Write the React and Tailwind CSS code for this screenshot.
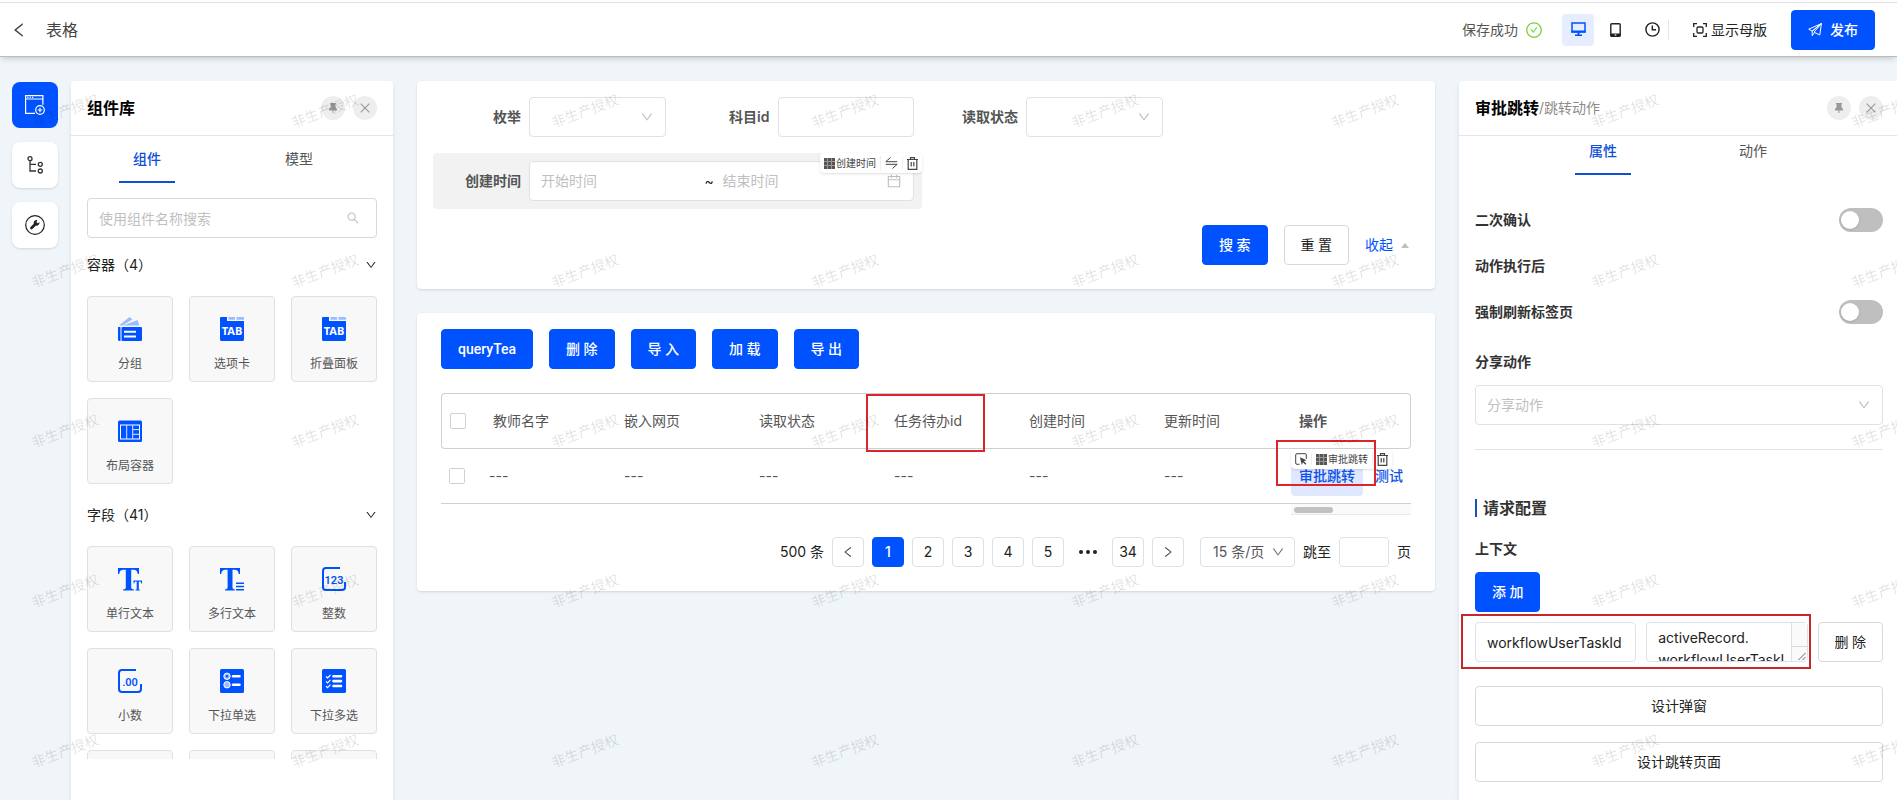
import { useState } from 'react'
import {
  AiOutlineCalendar,
  AiOutlineCheckCircle,
  AiOutlineClose,
  AiOutlineDown,
  AiOutlineLeft,
  AiOutlineRight,
  AiOutlineSearch,
} from 'react-icons/ai'

const BLUE = '#0052ff'
const LIGHT = '#9dbcff'

const CONTAINERS = [
  { name: '分组', icon: GroupIcon },
  { name: '选项卡', icon: TabIcon },
  { name: '折叠面板', icon: TabIcon },
  { name: '布局容器', icon: LayoutIcon },
]

const FIELDS = [
  { name: '单行文本', icon: TextIcon },
  { name: '多行文本', icon: MultiTextIcon },
  { name: '整数', icon: IntegerIcon },
  { name: '小数', icon: DecimalIcon },
  { name: '下拉单选', icon: RadioListIcon },
  { name: '下拉多选', icon: CheckListIcon },
  { name: '' },
  { name: '' },
  { name: '' },
]

const COLUMNS = ['教师名字', '嵌入网页', '读取状态', '任务待办id', '创建时间', '更新时间']

/* ---------- component library icons ---------- */

function GroupIcon() {
  return (
    <svg width="24" height="24" viewBox="0 0 24 24">
      <path d="M1 8.5 11.5 0l3 2.5L4.500 8.500z" fill={LIGHT} />
      <path d="M5 8.500 19.500 3l2 5.500z" fill={LIGHT} />
      <path d="M0 10h2.500v14H1.500A1.500 1.500 0 0 1 0 22.500z" fill={BLUE} />
      <rect x="3.500" y="10" width="20.500" height="14" rx="1" fill={BLUE} />
      <path d="M6 14.800h12M6 19.400h12" stroke="#fff" strokeWidth="2" />
    </svg>
  )
}

function TabIcon() {
  return (
    <svg width="24" height="24" viewBox="0 0 24 24">
      <path d="M1 0h6v4h17v18.500a1.500 1.500 0 0 1-1.500 1.500h-21A1.500 1.500 0 0 1 0 22.500V1a1 1 0 0 1 1-1z" fill={BLUE} />
      <path d="M8.500 0H15v2.800H8.500zM16.500 0H23a1 1 0 0 1 1 1v1.800h-7.500z" fill={LIGHT} />
      <text x="12" y="18" textAnchor="middle" fontSize="11" fontWeight="700" fill="#fff" fontFamily="Noto Sans, sans-serif">
        TAB
      </text>
    </svg>
  )
}

function LayoutIcon() {
  return (
    <svg width="24" height="24" viewBox="0 0 24 24">
      <rect x="0" y="1.500" width="24" height="21.500" rx="1.500" fill={BLUE} />
      <rect x="2.500" y="6" width="19" height="14" fill="none" stroke="#fff" strokeWidth="1" />
      <path d="M8.700 6v14M14.700 6v14M14.700 10.600h7M14.700 15.300h7" stroke="#dbe6ff" strokeWidth="1" />
    </svg>
  )
}

function TextIcon() {
  return (
    <svg width="24" height="24" viewBox="0 0 24 24" fill={BLUE}>
      <path d="M0 1h21v6h-1.200c-.5-2.800-1.500-4.200-4.300-4.200h-2.300V20c0 1.700.5 2.200 2.600 2.300V23.500H5.200v-1.200c2.100-.1 2.600-.6 2.600-2.300V2.800H5.500C2.700 2.800 1.700 4.200 1.200 7H0z" />
      <path d="M15.500 13.500H24v3h-.7c-.2-1.300-.7-1.900-1.900-1.900h-.6v7.200c0 .7.300 1 1.200 1v.7h-4.500v-.7c.9 0 1.200-.3 1.200-1v-7.200h-.6c-1.200 0-1.700.6-1.900 1.900h-.7z" />
    </svg>
  )
}

function MultiTextIcon() {
  return (
    <svg width="24" height="24" viewBox="0 0 24 24" fill={BLUE}>
      <path d="M0 1h20v6h-1.200c-.5-2.800-1.500-4.200-4.300-4.200h-2V20c0 1.700.5 2.200 2.300 2.300V23.500H5v-1.200c2.100-.1 2.600-.6 2.600-2.300V2.800H5.500C2.700 2.800 1.700 4.200 1.200 7H0z" />
      <path d="M16 15.500h8V17h-8zM16 18.700h8v1.500h-8zM16 22h8v1.500h-8z" />
    </svg>
  )
}

function NumberFrame({ children }) {
  return (
    <svg width="24" height="24" viewBox="0 0 24 24">
      <path
        d="M18 1H4a3 3 0 0 0-3 3v16a3 3 0 0 0 3 3h16a3 3 0 0 0 3-3v-5"
        fill="none"
        stroke={BLUE}
        strokeWidth="2"
      />
      <text x="12" y="16.500" textAnchor="middle" fontSize="11" fontWeight="600" fill={BLUE} fontFamily="Roboto, sans-serif">
        {children}
      </text>
    </svg>
  )
}

function IntegerIcon() {
  return <NumberFrame>123</NumberFrame>
}

function DecimalIcon() {
  return <NumberFrame>.00</NumberFrame>
}

function RadioListIcon() {
  return (
    <svg width="24" height="24" viewBox="0 0 24 24">
      <rect width="24" height="24" rx="1.500" fill={BLUE} />
      <circle cx="7" cy="7.300" r="3.200" fill={LIGHT} stroke="#fff" />
      <circle cx="7" cy="7.300" r="1.200" fill={BLUE} />
      <circle cx="7" cy="15.800" r="3.200" fill={LIGHT} stroke="#fff" />
      <path d="M13 7.300h6.500M13 15.800h6.500" stroke="#fff" strokeWidth="2.600" strokeLinecap="round" />
    </svg>
  )
}

function CheckListIcon() {
  return (
    <svg width="24" height="24" viewBox="0 0 24 24" fill="none" stroke="#fff">
      <rect width="24" height="24" rx="1.500" fill={BLUE} stroke="none" />
      <path d="M4 7.500l1.500 1.500 3-3M4 12.300l1.500 1.500 3-3M4 17.100l1.500 1.500 3-3" strokeWidth="1.200" />
      <path d="M11.500 7.300h7.500M11.500 12.100h7.500M11.500 17h7.500" strokeWidth="2.600" strokeLinecap="round" />
    </svg>
  )
}

/* ---------- ui icons ---------- */

function AddPageIcon() {
  return (
    <svg width="20" height="20" viewBox="0 0 20 20" fill="none" stroke="#fff" strokeWidth="1.200">
      <path d="M10 18.400H.6V.6h17.300v9.200M.6 4h17.300" />
      <path d="M2.200 2.300h1.200M4.600 2.300h1.200M7 2.300h1.200" />
      <circle cx="15" cy="15" r="4.300" />
      <path d="M15 12.800v4.400M12.800 15h4.400" />
    </svg>
  )
}

function TreeIcon() {
  return (
    <svg width="18" height="18" viewBox="0 0 18 18" fill="none" stroke="#333" strokeWidth="1.300">
      <circle cx="4" cy="2.700" r="2" />
      <circle cx="14.300" cy="8.300" r="2" />
      <circle cx="14.300" cy="15" r="2" />
      <path d="M4 4.700V15h6M4 8.300h6" />
    </svg>
  )
}

function WrenchIcon() {
  return (
    <svg width="20" height="20" viewBox="0 0 20 20">
      <circle cx="10" cy="10" r="9.300" fill="none" stroke="#222" strokeWidth="1.200" />
      <path d="M14.600 7.300l-2 .9-1.100-1 .8-2.100c-1.900-.4-3.700 1-3.600 2.900l.1.800-3.300 3.300a1.300 1.300 0 0 0 1.900 1.900l3.300-3.300c2 .5 4-1.200 3.900-3.400z" fill="#222" />
    </svg>
  )
}

function PinIcon() {
  return (
    <svg width="8" height="10" viewBox="0 0 8 10" fill="#999">
      <path d="M1 0h6v1.200H6.500v3L8 6v1.500H4.500V10h-1V7.500H0V6l1.500-1.800v-3H1z" />
    </svg>
  )
}

function DesktopIcon() {
  return (
    <svg width="15" height="15" viewBox="0 0 15 15">
      <path d="M1 1h13v9H1z" fill="none" stroke={BLUE} strokeWidth="1.500" />
      <path d="M.300 8.500h14.400v2H.3zM6.500 10.500h2v2.500h-2zM4 12.500h7V14H4z" fill={BLUE} />
    </svg>
  )
}

function TabletIcon() {
  return (
    <svg width="11" height="14" viewBox="0 0 11 14">
      <rect x=".800" y=".800" width="9.400" height="12.400" rx="1" fill="none" stroke="#222" strokeWidth="1.400" />
      <path d="M.5 10.500h10V13a.8.8 0 0 1-.8.800H1.300a.8.800 0 0 1-.8-.8z" fill="#222" />
      <rect x="4.700" y="11.400" width="1.600" height="1.200" fill="#fff" />
    </svg>
  )
}

function ClockIcon() {
  return (
    <svg width="15" height="15" viewBox="0 0 15 15" fill="none" stroke="#222" strokeWidth="1.400">
      <circle cx="7.500" cy="7.500" r="6.600" />
      <path d="M7.300 3.500v4.300H11" />
    </svg>
  )
}

function FrameIcon() {
  return (
    <svg width="14" height="14" viewBox="0 0 14 14" fill="none" stroke="#222" strokeWidth="1.300">
      <path d="M.7 4V.7H4M10 .700h3.300V4M13.300 10v3.300H10M4 13.300H.7V10" />
      <rect x="4" y="4" width="6" height="6" rx="1.200" />
    </svg>
  )
}

function PlaneIcon() {
  return (
    <svg width="14" height="14" viewBox="0 0 14 14" fill="none" stroke="#fff" strokeLinejoin="round">
      <path d="M13.400.600.7 6.200l3.500 1.900zM13.400.600 4.200 8.100v4.600l2.300-3.300M13.400.600 11.800 12 6 9.200z" />
    </svg>
  )
}

function GridIcon() {
  return (
    <svg width="11" height="11" viewBox="0 0 11 11">
      <rect width="11" height="11" fill="#999" />
      <path
        d="M0 0h3v3H0zM4 0h3v3H4zM8 0h3v3H8zM0 4h3v3H0zM4 4h3v3H4zM8 4h3v3H8zM0 8h3v3H0zM4 8h3v3H4zM8 8h3v3H8z"
        fill="#555"
      />
    </svg>
  )
}

function SwapIcon() {
  return (
    <svg width="13" height="12" viewBox="0 0 13 12" fill="none" stroke="#444">
      <path d="M5.500.500.800 4.700h11.400M7.500 11.500l4.700-4.200H.8" />
    </svg>
  )
}

function TrashIcon() {
  return (
    <svg width="11" height="13" viewBox="0 0 11 13" fill="none" stroke="#444" strokeWidth="1.200">
      <path d="M0 2.500h11M3.500 2.500V.700h4v1.800M1.200 2.500v9.800h8.600V2.500M4.200 5v4.500M6.800 5v4.500" />
    </svg>
  )
}

function SelectParentIcon() {
  return (
    <svg width="12" height="12" viewBox="0 0 12 12">
      <path d="M4.500 11.300H2A1.300 1.300 0 0 1 .7 10V2A1.300 1.300 0 0 1 2 .7h8A1.300 1.300 0 0 1 11.300 2v4" fill="none" stroke="#444" />
      <path d="M5 4.200l6.500 3-2.600 1 2.500 2.600-1 1-2.500-2.600L6.700 12z" fill="#444" />
    </svg>
  )
}

/* ---------- shared pieces ---------- */

function Button({ primary, className = '', children }) {
  return (
    <button
      type="button"
      className={`flex h-10 items-center justify-center whitespace-nowrap rounded border px-4 font-[Roboto,'Noto_Sans_CJK_SC',sans-serif] text-sm ${
        primary ? 'border-[#0052ff] bg-[#0052ff] font-medium text-white' : 'border-[#d9d9d9] bg-white text-[#222]'
      } ${className}`}
    >
      {children}
    </button>
  )
}

function Select({ id, label, placeholder = '' }) {
  return (
    <div className="relative min-w-0 flex-1">
      <select
        id={id}
        aria-label={label}
        className="h-10 w-full appearance-none rounded border border-[#e0e0e8] bg-white px-[11px] text-sm text-[#bfbfbf]"
      >
        <option>{placeholder}</option>
      </select>
      <AiOutlineDown className="pointer-events-none absolute right-3 top-[13px] size-[14px] text-[#bfbfbf]" />
    </div>
  )
}

function PanelHeader({ title, sub, className }) {
  return (
    <div className={`flex h-[55px] shrink-0 items-center border-b border-[#e3e5e8] pl-4 ${className}`}>
      <h2 className="text-base font-bold text-black">{title}</h2>
      {sub && <span className="text-sm text-[#8c8c8c]">{sub}</span>}
      <div className="ml-auto flex gap-2">
        <button type="button" aria-label="固定" className="flex size-6 items-center justify-center rounded-full bg-[#eee]">
          <PinIcon />
        </button>
        <button type="button" aria-label="关闭" className="flex size-6 items-center justify-center rounded-full bg-[#eee]">
          <AiOutlineClose className="size-[14px] text-[#999]" />
        </button>
      </div>
    </div>
  )
}

function Tabs({ items, className }) {
  const [active, setActive] = useState(0)
  return (
    <div role="tablist" className={`grid shrink-0 grid-cols-2 ${className}`}>
      {items.map((name, i) => (
        <button
          key={name}
          type="button"
          role="tab"
          aria-selected={i === active}
          onClick={() => setActive(i)}
          className={`mx-auto h-[39px] w-14 border-b-2 pb-2 text-sm ${
            i === active ? 'border-[#0f4fd8] font-medium text-[#0f4fd8]' : 'border-transparent text-[#555]'
          }`}
        >
          {name}
        </button>
      ))}
    </div>
  )
}

function Section({ title, items }) {
  return (
    <section className="flex flex-col gap-5">
      <button type="button" className="flex h-[22px] items-center justify-between text-sm text-[#222]">
        {title}
        <AiOutlineDown className="size-3" />
      </button>
      <div className="grid grid-cols-3 gap-4">
        {items.map(({ name, icon: Icon }, i) => (
          <div
            key={i}
            className="flex h-[86px] flex-col items-center gap-[13px] rounded border border-[#dfe0e6] bg-[#f8f8f9] pt-5 text-xs leading-5 text-[#555]"
          >
            {Icon && <Icon />}
            {name}
          </div>
        ))}
      </div>
    </section>
  )
}

function Field({ id, label, className = '', children }) {
  return (
    <div className={`relative flex items-center gap-2 rounded py-2 pr-2 ${className}`}>
      <label htmlFor={id} className="w-22 shrink-0 text-right text-sm font-semibold text-[#555]">
        {label}
      </label>
      {children}
    </div>
  )
}

function Toggle({ id, label }) {
  return (
    <div className="flex h-[46px] items-center justify-between">
      <label htmlFor={id} className="text-sm font-semibold text-[#333]">
        {label}
      </label>
      <span className="relative h-6 w-11">
        <input id={id} type="checkbox" role="switch" className="peer h-6 w-11 appearance-none rounded-full bg-[#bfbfbf] checked:bg-[#0052ff]" />
        <span className="pointer-events-none absolute left-0.5 top-[3px] size-[18px] rounded-full bg-white shadow-sm peer-checked:left-6" />
      </span>
    </div>
  )
}

function Watermark() {
  return (
    <div className="pointer-events-none absolute inset-0 z-40 overflow-hidden" aria-hidden="true">
      <div className="-ml-[65px] mt-[31px] grid grid-cols-[repeat(8,260px)]">
        {Array.from({ length: 40 }, (_, i) => (
          <div key={i} className="flex h-40 items-center justify-center">
            <span className="-rotate-20 text-sm text-black/13">非生产授权</span>
          </div>
        ))}
      </div>
    </div>
  )
}

/* ---------- page parts ---------- */

function Header() {
  return (
    <header className="z-10 mt-[2px] flex h-[55px] shrink-0 items-center border-t border-b border-t-[#e0e0e0] border-b-[#bbb] bg-white pl-[10px] pr-[22px] shadow-md">
      <button type="button" aria-label="返回">
        <AiOutlineLeft className="size-[18px] text-[#444]" />
      </button>
      <h1 className="ml-[18px] text-base text-[#444]">表格</h1>
      <div className="ml-auto flex items-center">
        <span className="text-sm text-[#555]">保存成功</span>
        <AiOutlineCheckCircle className="ml-[7px] size-[18px] text-[#7ed03c]" />
        <div className="ml-[19px] flex items-center gap-[5px]">
          <button type="button" aria-label="桌面" className="flex size-8 items-center justify-center rounded bg-[#e5edff]">
            <DesktopIcon />
          </button>
          <button type="button" aria-label="手机" className="flex size-8 items-center justify-center">
            <TabletIcon />
          </button>
          <button type="button" aria-label="历史" className="flex size-8 items-center justify-center">
            <ClockIcon />
          </button>
        </div>
        <span className="h-5 w-px bg-[#e5e5e5]" />
        <button type="button" className="ml-6 mr-6 flex items-center gap-1 text-sm text-[#222]">
          <FrameIcon />
          显示母版
        </button>
        <Button primary className="gap-2">
          <PlaneIcon />
          发布
        </Button>
      </div>
    </header>
  )
}

function Rail() {
  return (
    <nav className="flex shrink-0 flex-col gap-[14px] pt-px">
      <button type="button" aria-label="组件库" className="flex size-[46px] items-center justify-center rounded-lg bg-[#0052ff]">
        <AddPageIcon />
      </button>
      <button type="button" aria-label="大纲" className="flex size-[46px] items-center justify-center rounded-lg bg-white shadow">
        <TreeIcon />
      </button>
      <button type="button" aria-label="工具" className="flex size-[46px] items-center justify-center rounded-lg bg-white shadow">
        <WrenchIcon />
      </button>
    </nav>
  )
}

function Library() {
  return (
    <aside className="ml-[13px] flex w-[322px] shrink-0 flex-col rounded-t bg-white pb-[41px] shadow-md">
      <PanelHeader title="组件库" className="pr-4" />
      <Tabs items={['组件', '模型']} className="mr-[18px] mt-2" />
      <div className="relative mx-4 mt-[15px] shrink-0">
        <input
          type="text"
          aria-label="搜索组件"
          placeholder="使用组件名称搜索"
          className="h-10 w-full rounded border border-[#d9d9d9] px-[11px] text-sm placeholder:text-[#bfbfbf]"
        />
        <AiOutlineSearch className="absolute right-[17px] top-[13px] size-[14px] text-[#bfbfbf]" />
      </div>
      <div className="flex min-h-0 flex-1 flex-col gap-5 overflow-hidden px-4 pt-4">
        <Section title="容器（4）" items={CONTAINERS} />
        <Section title="字段（41）" items={FIELDS} />
      </div>
    </aside>
  )
}

function Toolbar({ label, parent, swap, className }) {
  return (
    <div className={`absolute z-10 flex h-5 items-center rounded bg-white text-[10px] text-[#444] shadow ${className}`}>
      {parent && (
        <button type="button" aria-label="选择父级" className="border-r border-[#eee] px-1">
          <SelectParentIcon />
        </button>
      )}
      <span className="flex items-center gap-px whitespace-nowrap border-r border-[#eee] px-1">
        <GridIcon />
        {label}
      </span>
      {swap && (
        <button type="button" aria-label="切换" className="border-r border-[#eee] px-1">
          <SwapIcon />
        </button>
      )}
      <button type="button" aria-label="删除" className="px-1">
        <TrashIcon />
      </button>
    </div>
  )
}

function SearchForm() {
  return (
    <form className="rounded bg-white px-4 pb-6 pt-2 shadow-sm">
      <div className="grid grid-cols-4 gap-2">
        <Field id="enum" label="枚举">
          <Select id="enum" />
        </Field>
        <Field id="subject" label="科目id">
          <input id="subject" type="text" className="h-10 w-full min-w-0 rounded border border-[#e0e0e8] px-[11px] text-sm" />
        </Field>
        <Field id="status" label="读取状态">
          <Select id="status" />
        </Field>
        <Field id="start" label="创建时间" className="col-span-2 col-start-1 bg-[#f2f2f2]">
          <div className="flex h-10 min-w-0 flex-1 items-center rounded border border-[#e0e0e8] bg-white px-[11px] text-sm">
            <input id="start" type="text" placeholder="开始时间" className="min-w-0 flex-1 placeholder:text-[#bfbfbf]" />
            <span className="w-[18px] text-[#222]">~</span>
            <input type="text" aria-label="结束时间" placeholder="结束时间" className="min-w-0 flex-1 placeholder:text-[#bfbfbf]" />
            <AiOutlineCalendar className="size-4 text-[#bfbfbf]" />
          </div>
          <Toolbar label="创建时间" swap className="right-0 top-0" />
        </Field>
      </div>
      <div className="mt-4 flex items-center justify-end gap-4 pr-[10px]">
        <Button primary>搜 索</Button>
        <Button>重 置</Button>
        <button type="button" className="flex items-center gap-2 text-sm text-[#0052ff]">
          收起
          <span className="border-x-4 border-b-[5px] border-x-transparent border-b-[#bfbfbf]" />
        </button>
      </div>
    </form>
  )
}

function DataTable() {
  return (
    <table className="mt-6 w-full table-fixed border-separate border-spacing-0 text-left text-sm text-[#555]">
      <colgroup>
        <col className="w-8" />
        {COLUMNS.map((c) => (
          <col key={c} />
        ))}
        <col className="w-32" />
      </colgroup>
      <thead>
        <tr className="h-14">
          <th className="rounded-l border-y border-l border-[#d0d0d0] pl-2">
            <input type="checkbox" aria-label="全选" className="block size-4 appearance-none rounded-xs border border-[#d0d0d0] bg-white" />
          </th>
          {COLUMNS.map((c, i) => (
            <th key={c} className={`relative border-y border-[#d0d0d0] font-normal ${i === 0 ? 'pl-5' : 'pl-4'}`}>
              {c}
              {c === '任务待办id' && (
                <span className="pointer-events-none absolute -bottom-1 -left-3 right-7 top-0 z-20 border-2 border-[#d9262c]" />
              )}
            </th>
          ))}
          <th className="rounded-r border-y border-r border-[#d0d0d0] pl-4 font-semibold">操作</th>
        </tr>
      </thead>
      <tbody>
        <tr className="h-[55px]">
          <td className="border-b border-[#d0d0d0] pl-2">
            <input type="checkbox" aria-label="选择行" className="block size-4 appearance-none rounded-xs border border-[#d0d0d0] bg-white" />
          </td>
          {COLUMNS.map((c) => (
            <td key={c} className="border-b border-[#d0d0d0] pl-4">---</td>
          ))}
          <td className="relative border-b border-[#d0d0d0] pl-2">
            <div className="flex gap-1 font-medium text-[#0f52e8]">
              <button type="button" className="h-10 rounded bg-[#dfe8ff] px-2">审批跳转</button>
              <button type="button" className="h-10 px-2">测试</button>
            </div>
            <Toolbar label="审批跳转" parent className="left-2 top-0" />
            <span className="pointer-events-none absolute -left-[7px] -top-[9px] z-20 h-[46px] w-[100px] border-2 border-[#d9262c]" />
          </td>
        </tr>
      </tbody>
    </table>
  )
}

function PageButton({ label, active, children }) {
  return (
    <button
      type="button"
      aria-label={label}
      className={`flex h-[30px] w-8 items-center justify-center rounded border ${
        active ? 'border-[#0052ff] bg-[#0052ff] font-medium text-white' : 'border-[#e0e0e8] bg-white'
      }`}
    >
      {children}
    </button>
  )
}

function Pagination() {
  return (
    <div className="mt-[22px] flex items-center justify-end gap-2 text-sm text-[#222]">
      <span>500 条</span>
      <PageButton label="上一页">
        <AiOutlineLeft className="size-[14px] text-[#555]" />
      </PageButton>
      <PageButton active>1</PageButton>
      <PageButton>2</PageButton>
      <PageButton>3</PageButton>
      <PageButton>4</PageButton>
      <PageButton>5</PageButton>
      <span className="flex w-8 items-center justify-center gap-[3px]">
        <i className="size-1 rounded-full bg-[#222]" />
        <i className="size-1 rounded-full bg-[#222]" />
        <i className="size-1 rounded-full bg-[#222]" />
      </span>
      <PageButton>34</PageButton>
      <PageButton label="下一页">
        <AiOutlineRight className="size-[14px] text-[#555]" />
      </PageButton>
      <div className="relative ml-2">
        <select aria-label="每页条数" className="h-[30px] w-[95px] appearance-none rounded border border-[#e0e0e8] bg-white pl-3 text-[#555]">
          <option>15 条/页</option>
        </select>
        <AiOutlineDown className="pointer-events-none absolute right-[10px] top-2 size-[14px] text-[#777]" />
      </div>
      <label htmlFor="jump">跳至</label>
      <input id="jump" type="text" className="h-[30px] w-[50px] rounded border border-[#e0e0e8]" />
      <span>页</span>
    </div>
  )
}

function ContextRow() {
  return (
    <div className="mt-[10px] flex gap-[10px]">
      <div className="relative grid min-w-0 flex-1 grid-cols-2 gap-[10px]">
        <input
          type="text"
          aria-label="参数名"
          defaultValue="workflowUserTaskId"
          className="h-10 w-full min-w-0 rounded border border-[#e0e0e8] px-[11px] text-sm text-[#222]"
        />
        <div className="relative flex min-w-0">
          <textarea
            aria-label="参数值"
            defaultValue={'activeRecord.\nworkflowUserTaskId'}
            className="h-10 w-full resize-none overflow-hidden break-all rounded border border-[#e0e0e8] py-1 pl-[11px] pr-[18px] text-sm leading-[22px] text-[#222]"
          />
          {/* scroll track with resize corner */}
          <div className="pointer-events-none absolute inset-y-px right-px flex w-4 flex-col border-l border-[#e0e0e0] bg-[#fafafa]">
            <div className="flex-1 border-b border-[#d9d9d9]" />
            <svg width="15" height="14" viewBox="0 0 15 14" stroke="#666" fill="none">
              <path d="M6.500 13l7-7M10.500 13l3-3" />
            </svg>
          </div>
        </div>
        <span className="pointer-events-none absolute -bottom-[7px] -left-[14px] -right-[3px] -top-2 z-20 border-2 border-[#c9262c]" />
      </div>
      <Button>删 除</Button>
    </div>
  )
}

function Settings() {
  return (
    <aside className="ml-6 flex w-[438px] shrink-0 flex-col rounded-tl bg-white shadow-md">
      <PanelHeader title="审批跳转" sub="/跳转动作" className="pr-[14px]" />
      <Tabs items={['属性', '动作']} className="mx-auto w-[300px]" />
      <div className="flex flex-col pl-4 pr-[14px] pt-[22px]">
        <Toggle id="confirm" label="二次确认" />
        <h3 className="flex h-[46px] items-center text-sm font-semibold text-[#333]">动作执行后</h3>
        <Toggle id="refresh" label="强制刷新标签页" />
        <label htmlFor="share" className="mb-3 mt-4 text-sm font-semibold leading-[22px] text-[#333]">
          分享动作
        </label>
        <div className="flex">
          <Select id="share" placeholder="分享动作" />
        </div>
        <hr className="mt-6 border-[#e3e3e3]" />
        <h2 className="mt-12 flex h-5 items-center gap-[6px] text-base font-semibold text-[#333]">
          <span className="h-[18px] w-0.5 bg-[#1c4fb8]" />
          请求配置
        </h2>
        <h3 className="mb-3 mt-5 text-sm font-semibold leading-[22px] text-[#333]">上下文</h3>
        <Button primary className="self-start">添 加</Button>
        <ContextRow />
        <Button className="mt-6">设计弹窗</Button>
        <Button className="mt-4">设计跳转页面</Button>
      </div>
    </aside>
  )
}

export default function App() {
  return (
    <div className="relative flex h-screen flex-col overflow-hidden bg-white font-[Inter,'Noto_Sans_CJK_SC',sans-serif]">
      <Header />
      <div className="flex min-h-0 flex-1 bg-[#eff5f8] pl-3 pt-6">
        <Rail />
        <Library />
        <main className="ml-6 flex min-w-0 flex-1 flex-col gap-6">
          <SearchForm />
          <section className="rounded bg-white px-6 pb-6 pt-4 shadow-sm">
            <div className="flex gap-4">
              <Button primary>queryTea</Button>
              <Button primary>删 除</Button>
              <Button primary>导 入</Button>
              <Button primary>加 载</Button>
              <Button primary>导 出</Button>
            </div>
            <DataTable />
            <div className="ml-auto h-[11px] w-[120px] border-b border-[#e8e8e8] bg-[#fafafa] px-[3px] pt-[3px]">
              <div className="h-1.5 w-[39px] rounded-full bg-[#c1c1c1]" />
            </div>
            <Pagination />
          </section>
        </main>
        <Settings />
      </div>
      <Watermark />
    </div>
  )
}
